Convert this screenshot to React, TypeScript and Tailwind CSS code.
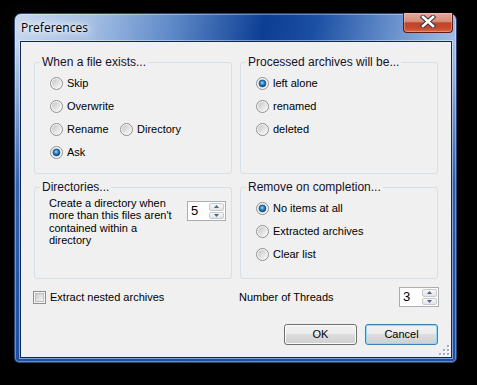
import React from "react";

function Radio({ checked }: { checked?: boolean }) {
  return (
    <svg width="13" height="13" viewBox="0 0 13 13" className="shrink-0">
      <circle cx="6.5" cy="6.5" r="6" fill="#f6f6f6" stroke="#8f8f8f" />
      <circle cx="6.5" cy="6.5" r="4.5" fill="url(#rbIn)" />
      {checked && <circle cx="6.5" cy="6.5" r="3.4" fill="url(#rbDot)" stroke="#1d4a80" strokeWidth="0.7" />}
    </svg>
  );
}

function Option({ label, checked, className }: { label: string; checked?: boolean; className?: string }) {
  return (
    <div className={"flex items-center gap-[4px] " + (className ?? "")}>
      <Radio checked={checked} />
      <span>{label}</span>
    </div>
  );
}

function SpinBtn({ up }: { up?: boolean }) {
  return (
    <div className="flex flex-1 items-center justify-center rounded-[2px] border border-[#c6c9ce] bg-[linear-gradient(to_bottom,#f7f7f7,#e2e4e7)]">
      <svg width="5" height="3" viewBox="0 0 5 3">
        <path d={up ? "M0 3 L2.5 0 L5 3Z" : "M0 0 L2.5 3 L5 0Z"} fill="#4b6286" />
      </svg>
    </div>
  );
}

function Spin({ value, className }: { value: string; className: string }) {
  return (
    <div className={"flex h-[20px] border border-[#abadb3] bg-white " + className}>
      <span className="flex-1 pl-[3px] text-[13px] leading-[18px]">{value}</span>
      <div className="my-[1px] mr-[1px] flex w-[15px] flex-col gap-[1px]">
        <SpinBtn up />
        <SpinBtn />
      </div>
    </div>
  );
}

function Group({ title, className, children }: { title: string; className: string; children: React.ReactNode }) {
  return (
    <div className={"relative rounded-[3px] border border-[#d5dfe5] pt-[9px] " + className}>
      <span className="absolute -top-[7px] left-[5px] bg-[#f0f0f0] px-[2px] text-[12px] leading-[13px] text-[#14102a]">
        {title}
      </span>
      {children}
    </div>
  );
}

export default function App() {
  return (
    <div className="h-[385px] w-[477px] overflow-hidden bg-black pl-[14px] pt-[13px] font-['Liberation_Sans',Arial,sans-serif] text-[11px] text-black">
      <svg className="absolute h-0 w-0">
        <defs>
          <linearGradient id="rbIn" x1="0" y1="0" x2="1" y2="1">
            <stop offset="0" stopColor="#c6c6c6" />
            <stop offset="1" stopColor="#f9f9f9" />
          </linearGradient>
          <radialGradient id="rbDot" cx="0.45" cy="0.4" r="0.6">
            <stop offset="0" stopColor="#a6e2ff" />
            <stop offset="0.45" stopColor="#2b8bd2" />
            <stop offset="1" stopColor="#0b3f7a" />
          </radialGradient>
          <linearGradient id="cbIn" x1="0" y1="0" x2="1" y2="1">
            <stop offset="0" stopColor="#cbcbcb" />
            <stop offset="1" stopColor="#f7f7f7" />
          </linearGradient>
        </defs>
      </svg>

      <div className="relative flex h-[350px] w-[443px] flex-col rounded-t-[7px] rounded-b-[5px] border border-[#2c4572] bg-[linear-gradient(to_bottom,rgba(28,82,168,0)_0px,rgba(28,82,168,0)_30px,rgba(27,80,166,0.85)_170px,#1a4fa6_100%),linear-gradient(100deg,#c6d8ef_0%,#a2bde3_16%,#5d88c7_32%,#0c3e93_50%,#1b4fa3_60%,#7399d2_78%,#a9c2e6_90%,#6a91cc_100%)] shadow-[inset_0_0_0_1px_rgba(255,255,255,0.35)]">
        {/* title bar */}
        <div className="flex h-[27px] items-center">
          <span className="ml-[6px] font-['Open_Sans',sans-serif] text-[12px] leading-[14px] text-black [text-shadow:0_0_4px_#fff,0_0_8px_#fff,0_0_14px_#fff,0_0_22px_rgba(255,255,255,0.9)]">
            Preferences
          </span>
          <div className="-mt-[1px] mr-[3px] ml-auto flex h-[20px] w-[50px] items-center justify-center self-start rounded-b-[4px] border border-t-0 border-[#5c1e14] bg-[linear-gradient(to_bottom,#e6aa9c_0%,#d58b79_45%,#c2432a_52%,#c64a2e_80%,#dd6a45_100%)] shadow-[inset_0_0_0_1px_rgba(255,220,210,0.35)]">
            <svg width="16" height="13" viewBox="0 0 16 13" className="-mt-[2px]">
              <path d="M3 2 L13 11 M13 2 L3 11" stroke="#3b3b3b" strokeWidth="4.6" strokeLinecap="square" />
              <path d="M3 2 L13 11 M13 2 L3 11" stroke="#fff" strokeWidth="2.6" strokeLinecap="square" />
            </svg>
          </div>
        </div>

        {/* client area */}
        <div className="relative mb-[4px] ml-[5px] mr-[4px] flex flex-1 flex-col border border-[#0f2755] bg-[#f0f0f0] px-[13px] pt-[20px] shadow-[0_0_0_1px_rgba(255,255,255,0.45)]">
          <div className="grid grid-cols-[198px_198px] gap-x-[8px] gap-y-[13px]">
            <Group title="When a file exists..." className="h-[112px] px-[15px]">
              <Option label="Skip" className="h-[23px]" />
              <Option label="Overwrite" className="h-[23px]" />
              <div className="flex h-[23px] items-center">
                <Option label="Rename" className="w-[70px]" />
                <Option label="Directory" />
              </div>
              <Option label="Ask" checked className="h-[23px]" />
            </Group>

            <Group title="Processed archives will be..." className="h-[112px] px-[15px]">
              <Option label="left alone" checked className="h-[23px]" />
              <Option label="renamed" className="h-[23px]" />
              <Option label="deleted" className="h-[23px]" />
            </Group>

            <Group title="Directories..." className="h-[92px] pl-[14px] pr-[5px]">
              <div className="flex items-start">
                <p className="flex-1 leading-[12.33px]">
                  Create a directory when
                  <br />
                  more than this files aren't
                  <br />
                  contained within a
                  <br />
                  directory
                </p>
                <Spin value="5" className="mt-[4px] w-[39px]" />
              </div>
            </Group>

            <Group title="Remove on completion..." className="h-[92px] px-[15px]">
              <Option label="No items at all" checked className="h-[23px]" />
              <Option label="Extracted archives" className="h-[23px]" />
              <Option label="Clear list" className="h-[23px]" />
            </Group>
          </div>

          <div className="mt-[8px] grid h-[20px] grid-cols-[198px_198px] items-center gap-x-[8px]">
            <div className="-ml-[1px] flex items-center gap-[4px]">
              <svg width="13" height="13" viewBox="0 0 13 13" className="shrink-0">
                <rect x="0.5" y="0.5" width="12" height="12" fill="#f4f4f4" stroke="#8f8f8f" />
                <rect x="2.5" y="2.5" width="8" height="8" fill="url(#cbIn)" stroke="#b1b5ba" strokeWidth="0.8" />
              </svg>
              <span>Extract nested archives</span>
            </div>
            <div className="-ml-[1px] -mr-[1px] flex items-center justify-between">
              <span>Number of Threads</span>
              <Spin value="3" className="w-[40px]" />
            </div>
          </div>

          <div className="mt-[17px] flex justify-end gap-[8px]">
            <button className="h-[21px] w-[73px] rounded-[3px] border border-[#707070] bg-[linear-gradient(to_bottom,#f2f2f2_0%,#ebebeb_50%,#dddddd_50%,#cfcfcf_100%)] text-[11px] shadow-[inset_0_0_0_1px_#fbfbfb]">
              OK
            </button>
            <button className="h-[21px] w-[73px] rounded-[3px] border border-[#3c7fb1] bg-[linear-gradient(to_bottom,#f2f2f2_0%,#ebebeb_50%,#dddddd_50%,#cfcfcf_100%)] text-[11px] shadow-[inset_0_0_0_1px_#8fdcfa]">
              Cancel
            </button>
          </div>

          {/* size grip */}
          <svg width="11" height="11" viewBox="0 0 11 11" className="absolute bottom-[1px] right-[1px]">
            {[
              [8, 0],
              [8, 4],
              [4, 4],
              [8, 8],
              [4, 8],
              [0, 8],
            ].map(([x, y]) => (
              <g key={`${x}-${y}`}>
                <rect x={x + 1} y={y + 1} width="2" height="2" fill="#fff" />
                <rect x={x} y={y} width="2" height="2" fill="#a9adb3" />
              </g>
            ))}
          </svg>
        </div>
      </div>
    </div>
  );
}
